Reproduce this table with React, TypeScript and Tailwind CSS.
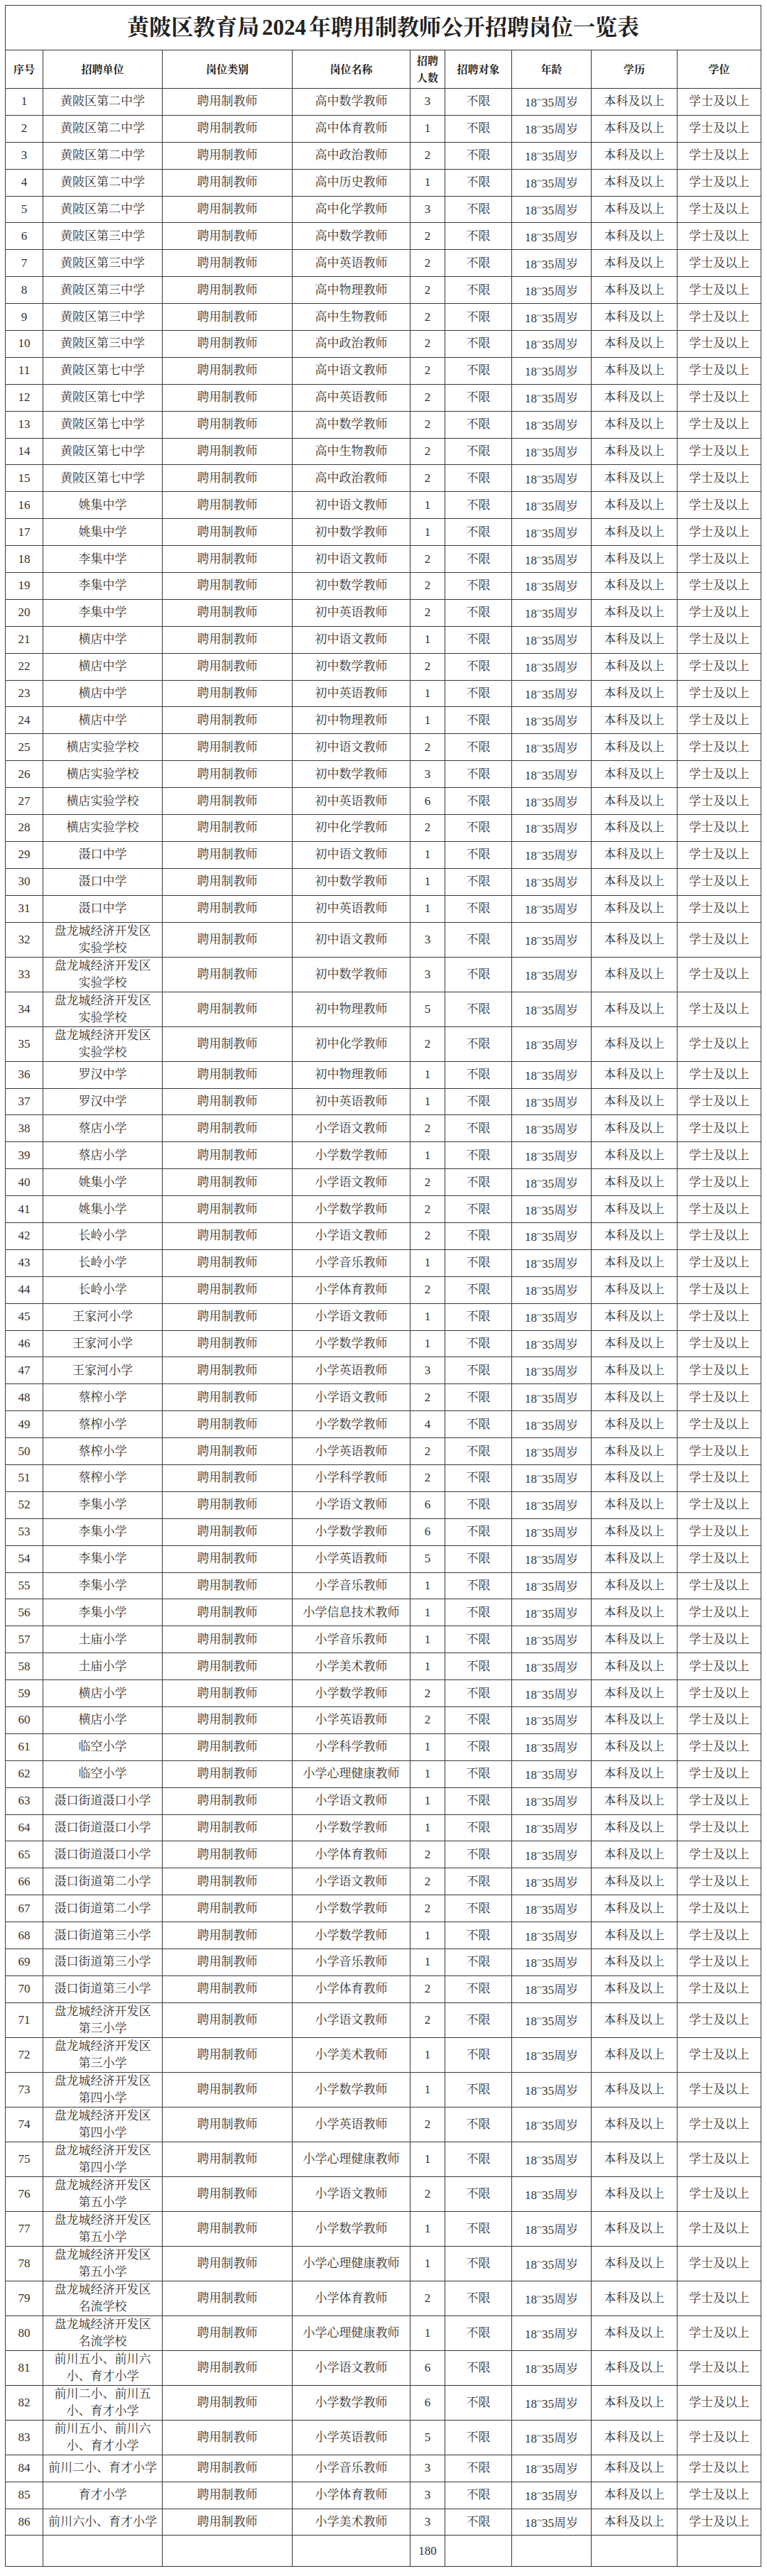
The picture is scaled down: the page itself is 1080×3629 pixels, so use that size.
import React from "react";

type Row = [string, string, number];

const PL = "盘龙城经济开发区";

const rows: Row[] = [
  ["黄陂区第二中学", "高中数学教师", 3],
  ["黄陂区第二中学", "高中体育教师", 1],
  ["黄陂区第二中学", "高中政治教师", 2],
  ["黄陂区第二中学", "高中历史教师", 1],
  ["黄陂区第二中学", "高中化学教师", 3],
  ["黄陂区第三中学", "高中数学教师", 2],
  ["黄陂区第三中学", "高中英语教师", 2],
  ["黄陂区第三中学", "高中物理教师", 2],
  ["黄陂区第三中学", "高中生物教师", 2],
  ["黄陂区第三中学", "高中政治教师", 2],
  ["黄陂区第七中学", "高中语文教师", 2],
  ["黄陂区第七中学", "高中英语教师", 2],
  ["黄陂区第七中学", "高中数学教师", 2],
  ["黄陂区第七中学", "高中生物教师", 2],
  ["黄陂区第七中学", "高中政治教师", 2],
  ["姚集中学", "初中语文教师", 1],
  ["姚集中学", "初中数学教师", 1],
  ["李集中学", "初中语文教师", 2],
  ["李集中学", "初中数学教师", 2],
  ["李集中学", "初中英语教师", 2],
  ["横店中学", "初中语文教师", 1],
  ["横店中学", "初中数学教师", 2],
  ["横店中学", "初中英语教师", 1],
  ["横店中学", "初中物理教师", 1],
  ["横店实验学校", "初中语文教师", 2],
  ["横店实验学校", "初中数学教师", 3],
  ["横店实验学校", "初中英语教师", 6],
  ["横店实验学校", "初中化学教师", 2],
  ["滠口中学", "初中语文教师", 1],
  ["滠口中学", "初中数学教师", 1],
  ["滠口中学", "初中英语教师", 1],
  [PL + "\n实验学校", "初中语文教师", 3],
  [PL + "\n实验学校", "初中数学教师", 3],
  [PL + "\n实验学校", "初中物理教师", 5],
  [PL + "\n实验学校", "初中化学教师", 2],
  ["罗汉中学", "初中物理教师", 1],
  ["罗汉中学", "初中英语教师", 1],
  ["蔡店小学", "小学语文教师", 2],
  ["蔡店小学", "小学数学教师", 1],
  ["姚集小学", "小学语文教师", 2],
  ["姚集小学", "小学数学教师", 2],
  ["长岭小学", "小学语文教师", 2],
  ["长岭小学", "小学音乐教师", 1],
  ["长岭小学", "小学体育教师", 2],
  ["王家河小学", "小学语文教师", 1],
  ["王家河小学", "小学数学教师", 1],
  ["王家河小学", "小学英语教师", 3],
  ["蔡榨小学", "小学语文教师", 2],
  ["蔡榨小学", "小学数学教师", 4],
  ["蔡榨小学", "小学英语教师", 2],
  ["蔡榨小学", "小学科学教师", 2],
  ["李集小学", "小学语文教师", 6],
  ["李集小学", "小学数学教师", 6],
  ["李集小学", "小学英语教师", 5],
  ["李集小学", "小学音乐教师", 1],
  ["李集小学", "小学信息技术教师", 1],
  ["土庙小学", "小学音乐教师", 1],
  ["土庙小学", "小学美术教师", 1],
  ["横店小学", "小学数学教师", 2],
  ["横店小学", "小学英语教师", 2],
  ["临空小学", "小学科学教师", 1],
  ["临空小学", "小学心理健康教师", 1],
  ["滠口街道滠口小学", "小学语文教师", 1],
  ["滠口街道滠口小学", "小学数学教师", 1],
  ["滠口街道滠口小学", "小学体育教师", 2],
  ["滠口街道第二小学", "小学语文教师", 2],
  ["滠口街道第二小学", "小学数学教师", 2],
  ["滠口街道第三小学", "小学数学教师", 1],
  ["滠口街道第三小学", "小学音乐教师", 1],
  ["滠口街道第三小学", "小学体育教师", 2],
  [PL + "\n第三小学", "小学语文教师", 2],
  [PL + "\n第三小学", "小学美术教师", 1],
  [PL + "\n第四小学", "小学数学教师", 1],
  [PL + "\n第四小学", "小学英语教师", 2],
  [PL + "\n第四小学", "小学心理健康教师", 1],
  [PL + "\n第五小学", "小学语文教师", 2],
  [PL + "\n第五小学", "小学数学教师", 1],
  [PL + "\n第五小学", "小学心理健康教师", 1],
  [PL + "\n名流学校", "小学体育教师", 2],
  [PL + "\n名流学校", "小学心理健康教师", 1],
  ["前川五小、前川六\n小、育才小学", "小学语文教师", 6],
  ["前川二小、前川五\n小、育才小学", "小学数学教师", 6],
  ["前川五小、前川六\n小、育才小学", "小学英语教师", 5],
  ["前川二小、育才小学", "小学音乐教师", 3],
  ["育才小学", "小学体育教师", 3],
  ["前川六小、育才小学", "小学美术教师", 3],
];

const grid =
  "grid grid-cols-[53px_168px_183px_166px_49px_94px_112px_121px_117px] divide-x divide-[#3a3a3a] border-b border-[#3a3a3a]";
const cell = "flex items-center justify-center text-center";

const Age = () => (
  <span>
    18<span className="align-[5px] text-[13px]">~</span>35周岁
  </span>
);

export default function App() {
  const total = rows.reduce((s, r) => s + r[2], 0);

  return (
    <div
      className="w-[1080px] bg-white px-[7px] pt-[7px] pb-[12px] text-[#333]"
      style={{ fontFamily: '"Liberation Serif", "Noto Serif CJK SC", "Noto Sans CJK SC", serif' }}
    >
      <div className="w-[1065px] border border-[#3a3a3a]">
        {/* 标题 */}
        <div className="flex h-[63px] items-center justify-center border-b border-[#3a3a3a] text-[31px] font-bold text-[#222]">
          黄陂区教育局<span className="mx-[4px]">2024</span>年聘用制教师公开招聘岗位一览表
        </div>

        {/* 表头 */}
        <div className={`${grid} h-[54px] text-[15px] font-bold leading-[24px] text-[#222]`}>
          <div className={cell}>序号</div>
          <div className={cell}>招聘单位</div>
          <div className={cell}>岗位类别</div>
          <div className={cell}>岗位名称</div>
          <div className={cell}>
            招聘
            <br />
            人数
          </div>
          <div className={cell}>招聘对象</div>
          <div className={cell}>年龄</div>
          <div className={cell}>学历</div>
          <div className={cell}>学位</div>
        </div>

        {rows.map(([unit, name, count], i) => {
          const twoLine = unit.includes("\n");
          return (
            <div
              key={i}
              className={`${grid} ${twoLine ? "h-[49px]" : "h-[37.9px]"} text-[17px] leading-[24px]`}
            >
              <div className={cell}>{i + 1}</div>
              <div className={`${cell} whitespace-pre-line`}>{unit}</div>
              <div className={cell}>聘用制教师</div>
              <div className={cell}>{name}</div>
              <div className={cell}>{count}</div>
              <div className={cell}>不限</div>
              <div className={cell}>
                <Age />
              </div>
              <div className={cell}>本科及以上</div>
              <div className={cell}>学士及以上</div>
            </div>
          );
        })}

        {/* 合计 */}
        <div className="grid h-[43px] grid-cols-[53px_168px_183px_166px_49px_94px_112px_121px_117px] divide-x divide-[#3a3a3a] text-[17px]">
          <div />
          <div />
          <div />
          <div />
          <div className={cell}>{total}</div>
          <div />
          <div />
          <div />
          <div />
        </div>
      </div>
    </div>
  );
}
